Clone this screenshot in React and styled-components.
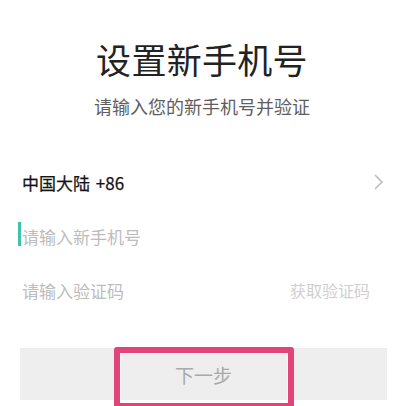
import React from "react";
import styled, { createGlobalStyle } from "styled-components";

const Global = createGlobalStyle`
  html, body {
    margin: 0;
    padding: 0;
    background: #ffffff;
  }
  body {
    font-family: "Noto Sans CJK SC", "Noto Sans", sans-serif;
  }
`;

const Page = styled.div`
  width: 400px;
  height: 406px;
  overflow: hidden;
  display: flex;
  flex-direction: column;
  background: #fff;
`;

const Header = styled.div`
  display: flex;
  flex-direction: column;
  align-items: center;
  padding-top: 41px;
  padding-left: 4px;
`;

const Title = styled.h1`
  margin: 0;
  font-size: 35px;
  line-height: 35px;
  font-weight: 400;
  color: #222;
  letter-spacing: 0.3px;
`;

const Subtitle = styled.p`
  margin: 21px 0 0;
  font-size: 18px;
  line-height: 18px;
  color: #5e5e5e;
`;

const Form = styled.div`
  display: flex;
  flex-direction: column;
  margin-top: 40px;
  padding: 0 16px 0 22px;
`;

const Row = styled.div`
  position: relative;
  height: 54px;
  display: flex;
  align-items: center;
  justify-content: space-between;
`;

const Label = styled.span`
  font-size: 17px;
  font-weight: 400;
  color: ${(p) => (p.$muted ? "#bcbcbc" : "#141414")};
  word-spacing: 2px;
  -webkit-text-stroke: ${(p) => (p.$muted ? "0" : "0.25px #141414")};
`;

const Action = styled.span`
  font-size: 16px;
  color: #cfcfcf;
  margin-right: 14px;
`;

const Caret = styled.span`
  position: absolute;
  left: -4px;
  top: 13px;
  width: 3px;
  height: 24px;
  background: #3cc3ad;
`;

const Chevron = () => (
  <svg width="12" height="18" viewBox="0 0 12 18" style={{ marginRight: -1 }}>
    <path d="M2 2 L9 9 L2 16" fill="none" stroke="#bdbdbd" strokeWidth="1.6" />
  </svg>
);

const NextBtn = styled.div`
  position: relative;
  margin: 31px 13px 0 20px;
  height: 52px;
  background: #eeeeee;
  display: flex;
  align-items: center;
  justify-content: center;
  font-size: 19px;
  color: #a9a9a9;
`;

const Highlight = styled.div`
  position: absolute;
  left: 94px;
  top: -1px;
  width: 180px;
  height: 62px;
  box-sizing: border-box;
  border: 6px solid #e2447a;
  border-radius: 3px;
  box-shadow: inset 0 0 0 1px rgba(255, 255, 255, 0.8);
`;

export default function App() {
  return (
    <Page>
      <Global />
      <Header>
        <Title>设置新手机号</Title>
        <Subtitle>请输入您的新手机号并验证</Subtitle>
      </Header>
      <Form>
        <Row>
          <Label>中国大陆 +86</Label>
          <Chevron />
        </Row>
        <Row>
          <Caret />
          <Label $muted>请输入新手机号</Label>
        </Row>
        <Row>
          <Label $muted>请输入验证码</Label>
          <Action>获取验证码</Action>
        </Row>
      </Form>
      <NextBtn>
        下一步
        <Highlight />
      </NextBtn>
    </Page>
  );
}
